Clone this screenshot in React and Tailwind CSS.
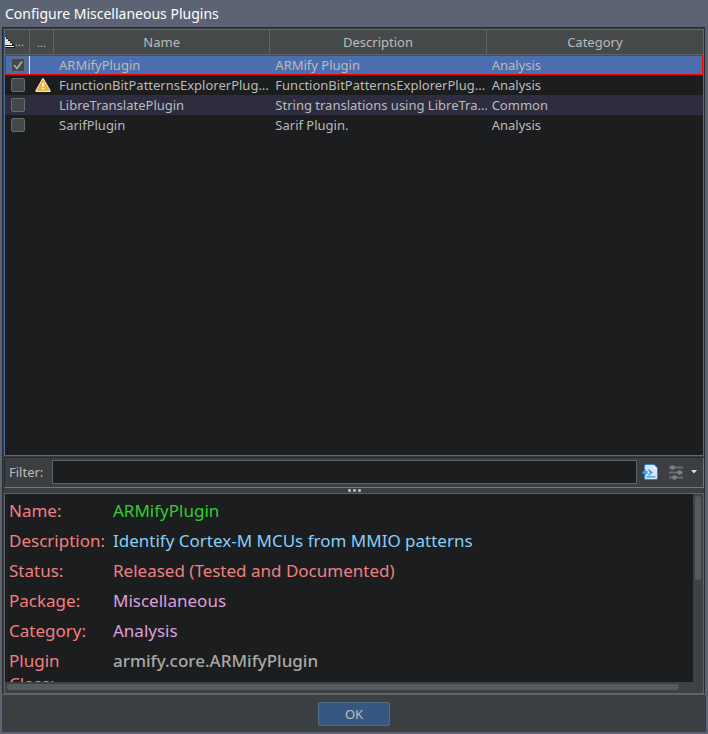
import React, { useState } from 'react';

const PLUGINS = [
  { name: 'ARMifyPlugin', description: 'ARMify Plugin', category: 'Analysis', installed: true },
  { name: 'FunctionBitPatternsExplorerPlug...', description: 'FunctionBitPatternsExplorerPlug...', category: 'Analysis', warning: true },
  { name: 'LibreTranslatePlugin', description: 'String translations using LibreTra...', category: 'Common' },
  { name: 'SarifPlugin', description: 'Sarif Plugin.', category: 'Analysis' },
];

const DETAILS = [
  { label: 'Name:', value: 'ARMifyPlugin', style: 'text-[#32cd32]' },
  { label: 'Description:', value: 'Identify Cortex-M MCUs from MMIO patterns', style: 'text-[#87cefa]' },
  { label: 'Status:', value: 'Released (Tested and Documented)', style: 'text-[#f08080]' },
  { label: 'Package:', value: 'Miscellaneous', style: 'text-[#dda0dd]' },
  { label: 'Category:', value: 'Analysis', style: 'text-[#dda0dd]' },
  { label: 'Plugin Class:', value: 'armify.core.ARMifyPlugin', style: 'text-[#a9a9a9] font-medium' },
];

function SortIcon() {
  return (
    <svg width="10" height="12" viewBox="0 0 10 12" shapeRendering="crispEdges" aria-hidden="true" className="shrink-0">
      <path d="M0 0h1v2h2v2h2v2h2v2h2v2h1v2H0z" fill="#1c1c1c" />
      <path d="M0 1h1v2H0zM0 3h3v2H0zM0 5h5v2H0zM0 7h7v2H0z" fill="#c8c8c8" />
      <path d="M0 2h1v1H0zM0 4h3v1H0zM0 6h5v1H0zM0 8h7v1H0zM0 10h9v1H0z" fill="#f4f4f4" />
    </svg>
  );
}

function WarningIcon() {
  return (
    <svg width="16" height="16" viewBox="0 0 16 16" role="img" aria-label="Warning" className="block">
      <path d="M8 2 14.800 14H1.200z" fill="#f8e8c0" stroke="#f8e8c0" strokeWidth="1.800" strokeLinejoin="round" />
      <path d="M8 3.300 13.800 13.300H2.200z" fill="#efb83a" stroke="#e0a028" strokeWidth=".8" strokeLinejoin="round" />
      <path d="M7 6h2l-.4 4H7.400zM7.200 11h1.600v1.500H7.200z" fill="#fff" />
    </svg>
  );
}

function FilterFileIcon() {
  return (
    <svg width="16" height="16" viewBox="0 0 16 16" aria-hidden="true">
      <path d="M2.500 2Q2.500 .5 4 .5H12L15.500 4V14Q15.500 15.500 14 15.500H4Q2.500 15.500 2.500 14z" fill="#d3e7fa" stroke="#2f80d6" />
      <path d="M11.500 1v3.500H15z" fill="#fff" />
      <path d="M4.500 12.800h9" stroke="#4b9ae6" strokeWidth="1.400" />
      <path d="M0 8.500 4 5v2h1.500v3H4v2z" fill="#4a9ce8" />
      <path d="M6.500 4.800 11 8.500 6.500 12.200V10l1.500-1.500L6.500 7z" fill="#4a9ce8" />
    </svg>
  );
}

function SlidersIcon() {
  return (
    <svg width="16" height="16" viewBox="0 0 16 16" aria-hidden="true">
      <path d="M1 3.500h14M1 8.500h14M1 13.500h14" stroke="#6b6e70" strokeWidth="2" />
      <g fill="#7f8284">
        <circle cx="4.500" cy="3.500" r="2.300" />
        <circle cx="11.500" cy="8.500" r="2.300" />
        <circle cx="6.500" cy="13.500" r="2.300" />
      </g>
    </svg>
  );
}

function PluginCheckbox({ label, initial }) {
  const [on, setOn] = useState(Boolean(initial));
  return (
    <span className="relative block size-[14px]">
      <input
        type="checkbox"
        aria-label={label}
        checked={on}
        onChange={() => setOn(!on)}
        className="block size-[14px] appearance-none rounded-xs border border-[#6b6b6b] bg-[#43494a]"
      />
      {on && (
        <svg viewBox="0 0 14 14" aria-hidden="true" className="pointer-events-none absolute inset-0">
          <path d="M3 7 6 10.500 11 3.500" fill="none" stroke="#a7a7a7" strokeWidth="1.900" />
        </svg>
      )}
    </span>
  );
}

const headCell = 'border-r border-b border-[#616365] p-0 font-normal';
const lastHeadCell = 'border-b border-[#616365] p-0 font-normal';
const textCell = 'overflow-hidden whitespace-nowrap p-0 pl-[5px]';

function PluginTable() {
  return (
    <div className="min-h-0 flex-1 overflow-hidden border border-[#466d9b] bg-[#1c1d1e]">
      <table className="w-full table-fixed border-separate border-spacing-0 text-left text-[13px] leading-5">
        <colgroup>
          <col className="w-[25px]" />
          <col className="w-[24px]" />
          <col />
          <col />
          <col />
        </colgroup>
        <thead>
          <tr className="h-[25px] bg-[#45494a] text-center text-[#bbbbbb]">
            <th className={headCell}>
              <span className="flex items-center text-[11px]"><SortIcon />...</span>
            </th>
            <th className={headCell}><span className="text-[11px]">...</span></th>
            <th className={headCell}>Name</th>
            <th className={headCell}>Description</th>
            <th className={lastHeadCell}>Category</th>
          </tr>
        </thead>
        <tbody>
          {PLUGINS.map((p, i) => (
            <tr
              key={p.name}
              className={
                i === 0
                  ? 'h-5 bg-[#4b6eaf] text-[#bbbbbb] outline -outline-offset-1 outline-[#ff0000]'
                  : i === 2
                    ? 'h-5 bg-[#2d2d3f] text-[#bbbbbb]'
                    : 'h-5 text-[#bbbbbb]'
              }
            >
              <td className={i === 0 ? 'border-r border-[#f5f0c8] p-0 pl-1.5' : 'p-0 pl-1.5'}>
                <PluginCheckbox label={p.name} initial={p.installed} />
              </td>
              <td className="p-0 pl-[5px]">{p.warning && <WarningIcon />}</td>
              <td className={textCell}>{p.name}</td>
              <td className={textCell}>{p.description}</td>
              <td className={textCell}>{p.category}</td>
            </tr>
          ))}
        </tbody>
      </table>
    </div>
  );
}

function FilterBar() {
  return (
    <div className="mt-px flex h-[31px] items-center border border-t-[#28292a] border-r-[#737979] border-b-[#737979] border-l-[#28292a] pr-1.5 pb-0.5 pl-1">
      <label htmlFor="filter" className="w-[43px] text-[13px] leading-5 text-[#bbbbbb]">Filter:</label>
      <input id="filter" type="text" className="h-6 min-w-0 flex-1 border border-[#616365] bg-[#1c1d1e] px-1 text-[13px] text-[#bbbbbb] outline-none" />
      <button type="button" aria-label="Filter options" className="ml-[5px]"><FilterFileIcon /></button>
      <button type="button" aria-label="Column filters" className="ml-[10px] flex items-center gap-[7px]">
        <SlidersIcon />
        <svg width="6" height="4" viewBox="0 0 6 4" aria-hidden="true"><path d="M0 0h6L3 3.500z" fill="#ddd" /></svg>
      </button>
    </div>
  );
}

function DetailsPane() {
  return (
    <div className="grid h-[201px] grid-cols-[minmax(0,1fr)_10px] grid-rows-[minmax(0,1fr)_11px] border border-[#616365] bg-[#3f4244]">
      <dl className="overflow-hidden bg-[#1c1d1e] pt-0.5 pl-1 text-[17px]">
        {DETAILS.map((d) => (
          <div key={d.label} className="flex pt-[3px] pb-1 leading-[23px]">
            <dt className="w-[104px] shrink-0 pr-6 text-[#f08080]">{d.label}</dt>
            <dd className={d.style}>{d.value}</dd>
          </div>
        ))}
      </dl>
      <div className="pt-0.5 pl-0.5"><div className="h-[84px] w-[6px] rounded-full bg-[#565b5e]" /></div>
      <div className="pt-0.5 pl-0.5"><div className="h-[6px] w-[98%] rounded-full bg-[#565b5e]" /></div>
    </div>
  );
}

export default function App() {
  return (
    <div className="flex h-screen flex-col bg-[#5c6372] px-0.5 pb-0.5 font-['Noto_Sans','Open_Sans',sans-serif]">
      <h1 className="h-[27px] shrink-0 pl-[3px] text-[14px] leading-[27px] text-white">Configure Miscellaneous Plugins</h1>
      <main className="mr-px flex min-h-0 flex-1 flex-col border border-b-0 border-[#2b2c2d] bg-[#3c3f41] pt-px pl-px">
        <PluginTable />
        <FilterBar />
        <div className="flex h-[5px] items-center justify-center gap-0.5">
          <span className="size-[3px] rounded-[1px] bg-[#b4b4b4]" />
          <span className="size-[3px] rounded-[1px] bg-[#b4b4b4]" />
          <span className="size-[3px] rounded-[1px] bg-[#b4b4b4]" />
        </div>
        <DetailsPane />
      </main>
      <footer className="flex h-[38px] shrink-0 items-center justify-center border-t border-[#616365] bg-[#3c3f41]">
        <button type="button" className="h-6 w-[72px] rounded-xs border border-[#4c708c] bg-[#365880] text-[13px] leading-5 text-[#bbbbbb]">OK</button>
      </footer>
    </div>
  );
}
